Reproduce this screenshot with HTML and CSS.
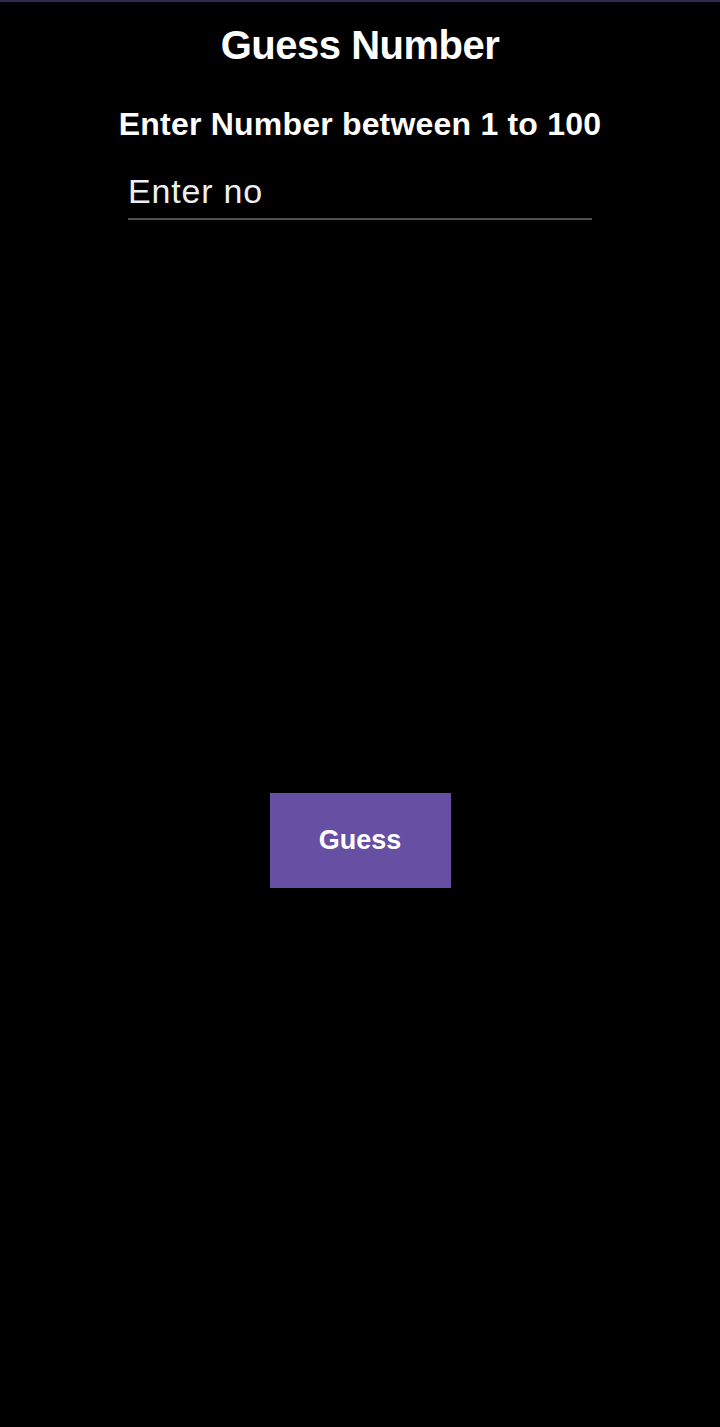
FILE: index.html
```html
<!DOCTYPE html>
<html>
<head>
<meta charset="utf-8">
<link rel="stylesheet" href="styles.css">
</head>
<body>
<div class="app">
  <h1 class="title">Guess Number</h1>
  <h2 class="subtitle">Enter Number between 1 to 100</h2>
  <div class="field"><span class="placeholder">Enter no</span></div>
  <button class="guess">Guess</button>
</div>
</body>
</html>
```
FILE: styles.css
```css
html, body {
  margin: 0;
  padding: 0;
  background: #000;
}
body {
  font-family: "Liberation Sans", Arial, sans-serif;
  color: #fff;
  height: 1427px;
  border-top: 2px solid #33284f;
  box-sizing: border-box;
}
.app {
  display: flex;
  flex-direction: column;
  align-items: center;
}
.title {
  margin: 19px 0 0;
  font-size: 40px;
  line-height: 48px;
  font-weight: bold;
  letter-spacing: -0.5px;
}
.subtitle {
  margin: 36px 0 0;
  font-size: 32px;
  line-height: 38px;
  font-weight: bold;
  letter-spacing: 0.2px;
}
.field {
  width: 464px;
  margin-top: 28px;
  border-bottom: 2px solid #505050;
  padding-bottom: 7px;
}
.placeholder {
  font-size: 34px;
  line-height: 40px;
  letter-spacing: 0.8px;
  color: #eeeeee;
  display: block;
}
.guess {
  margin-top: 573px;
  width: 181px;
  height: 95px;
  background: #6750a4;
  border: none;
  border-radius: 0;
  color: #fff;
  font-family: "Liberation Sans", Arial, sans-serif;
  font-weight: bold;
  font-size: 27px;
  padding: 0;
}
```
